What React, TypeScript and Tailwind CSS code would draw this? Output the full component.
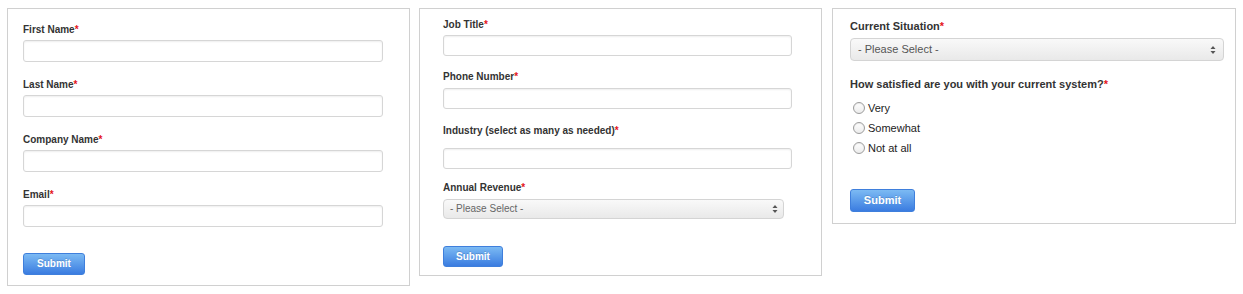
import React from "react";

const Req = () => <span className="text-[#e4141b]">*</span>;

const Arrows = () => (
  <svg width="6" height="10" viewBox="0 0 6 10" className="shrink-0">
    <path d="M3 1 L5.5 4 L0.5 4 Z" fill="#555" />
    <path d="M3 9 L5.5 6 L0.5 6 Z" fill="#555" />
  </svg>
);

const Radio = ({ label }: { label: string }) => (
  <div className="flex items-center h-[20px] pl-[3px]">
    <span className="w-[12px] h-[12px] rounded-full border border-[#9c9c9c] bg-linear-to-b from-white to-[#ececec] shadow-[inset_0_1px_1px_rgba(0,0,0,0.08)]" />
    <span className="ml-[3px] text-[11px] leading-[13px] text-[#222]">{label}</span>
  </div>
);

export default function App() {
  return (
    <div
      className="flex items-start bg-white w-[1243px] h-[294px] pt-[8px] pl-[7px]"
      style={{ fontFamily: '"Liberation Sans", Arial, Helvetica, sans-serif' }}
    >
      {/* Panel 1 */}
      <div className="w-[403px] h-[278px] border border-[#d0d0d0] pl-[15px] pt-[15px] shrink-0">
        {["First Name", "Last Name", "Company Name", "Email"].map((l) => (
          <div key={l} className="mb-[17px]">
            <div className="text-[10px] font-bold leading-[12px] text-[#333] mb-[4px]">
              {l}
              <Req />
            </div>
            <div className="w-[360px] h-[22px] rounded-[3px] border border-[#d6d6d6] bg-white shadow-[inset_0_1px_2px_rgba(0,0,0,0.07)]" />
          </div>
        ))}
        <div className="pt-[6px]">
          <button className="w-[62px] h-[22px] rounded-[3px] border border-[#3f7fdc] bg-linear-to-b from-[#7cbaf3] to-[#3b7ce0] text-white text-[10px] font-bold leading-[20px] [text-shadow:0_-1px_0_rgba(0,0,0,0.15)]">
            Submit
          </button>
        </div>
      </div>

      {/* Panel 2 */}
      <div className="ml-[9px] w-[403px] h-[268px] border border-[#d0d0d0] pl-[23px] pt-[10px] shrink-0">
        <div className="text-[10px] font-bold leading-[12px] text-[#333]">
          Job Title
          <Req />
        </div>
        <div className="mt-[4px] w-[349px] h-[21px] rounded-[3px] border border-[#d6d6d6] bg-white shadow-[inset_0_1px_2px_rgba(0,0,0,0.07)]" />
        <div className="mt-[15px] text-[10px] font-bold leading-[12px] text-[#333]">
          Phone Number
          <Req />
        </div>
        <div className="mt-[5px] w-[349px] h-[21px] rounded-[3px] border border-[#d6d6d6] bg-white shadow-[inset_0_1px_2px_rgba(0,0,0,0.07)]" />
        <div className="mt-[16px] text-[10px] font-bold leading-[12px] text-[#333]">
          Industry (select as many as needed)
          <Req />
        </div>
        <div className="mt-[11px] w-[349px] h-[21px] rounded-[3px] border border-[#d6d6d6] bg-white shadow-[inset_0_1px_2px_rgba(0,0,0,0.07)]" />
        <div className="mt-[13px] text-[10px] font-bold leading-[12px] text-[#333]">
          Annual Revenue
          <Req />
        </div>
        <div className="mt-[5px] w-[341px] h-[20px] rounded-[4px] border border-[#d4d4d4] bg-linear-to-b from-[#f9f9f9] to-[#e9e9e9] flex items-center justify-between pl-[6px] pr-[5px]">
          <span className="text-[10px] leading-[12px] text-[#666]">- Please Select -</span>
          <Arrows />
        </div>
        <div className="mt-[24px]">
          <button className="w-[60px] h-[21px] rounded-[3px] border border-[#3f7fdc] bg-linear-to-b from-[#7cbaf3] to-[#3b7ce0] text-white text-[10px] font-bold leading-[19px] [text-shadow:0_-1px_0_rgba(0,0,0,0.15)]">
            Submit
          </button>
        </div>
      </div>

      {/* Panel 3 */}
      <div className="ml-[10px] w-[404px] h-[216px] border border-[#d0d0d0] pl-[17px] pt-[11px] shrink-0">
        <div className="text-[11px] font-bold leading-[13px] text-[#333]">
          Current Situation
          <Req />
        </div>
        <div className="mt-[5px] w-[374px] h-[23px] rounded-[4px] border border-[#d4d4d4] bg-linear-to-b from-[#f9f9f9] to-[#e9e9e9] flex items-center justify-between pl-[7px] pr-[7px]">
          <span className="text-[11px] leading-[13px] text-[#555]">- Please Select -</span>
          <Arrows />
        </div>
        <div className="mt-[17px] text-[11px] font-bold leading-[13px] text-[#333]">
          How satisfied are you with your current system?
          <Req />
        </div>
        <div className="mt-[7px]">
          <Radio label="Very" />
          <Radio label="Somewhat" />
          <Radio label="Not at all" />
        </div>
        <div className="mt-[29px]">
          <button className="w-[65px] h-[23px] rounded-[3px] border border-[#3f7fdc] bg-linear-to-b from-[#7cbaf3] to-[#3b7ce0] text-white text-[11px] font-bold leading-[21px] [text-shadow:0_-1px_0_rgba(0,0,0,0.15)]">
            Submit
          </button>
        </div>
      </div>
    </div>
  );
}
